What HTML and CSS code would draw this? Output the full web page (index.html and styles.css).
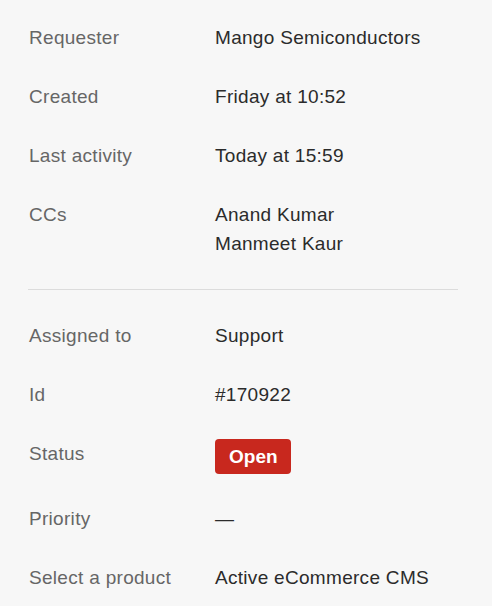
FILE: index.html
```html
<!DOCTYPE html>
<html lang="en">
<head>
  <meta charset="UTF-8">
  <meta name="viewport" content="width=device-width, initial-scale=1.0">
  <title>Ticket details</title>
  <link rel="stylesheet" href="styles.css">
</head>
<body>
  <div class="details">
    <div class="group">
      <div class="row">
        <div class="label">Requester</div>
        <div class="value">Mango Semiconductors</div>
      </div>
      <div class="row">
        <div class="label">Created</div>
        <div class="value">Friday at 10:52</div>
      </div>
      <div class="row">
        <div class="label">Last activity</div>
        <div class="value">Today at 15:59</div>
      </div>
      <div class="row">
        <div class="label">CCs</div>
        <div class="value">Anand Kumar<br>Manmeet Kaur</div>
      </div>
    </div>

    <hr class="divider">

    <div class="group">
      <div class="row">
        <div class="label">Assigned to</div>
        <div class="value">Support</div>
      </div>
      <div class="row">
        <div class="label">Id</div>
        <div class="value">#170922</div>
      </div>
      <div class="row">
        <div class="label">Status</div>
        <div class="value"><span class="badge">Open</span></div>
      </div>
      <div class="row">
        <div class="label">Priority</div>
        <div class="value">—</div>
      </div>
      <div class="row">
        <div class="label">Select a product</div>
        <div class="value">Active eCommerce CMS</div>
      </div>
    </div>
  </div>
</body>
</html>
```

FILE: styles.css
```css
body {
  background-color: #f7f7f7;
  color: #333;
  font-family: "Liberation Sans", Arial, sans-serif;
  font-size: 19px;
  line-height: 29px;
  letter-spacing: 0.3px;
  margin: 0;
  padding: 0;
}
.details {
  padding: 23px 34px 0 29px;
}
.group {
  display: flex;
  flex-direction: column;
  gap: 30px;
}
.row {
  display: flex;
  align-items: flex-start;
}
.label {
  width: 186px;
  flex-shrink: 0;
  color: #666;
}
.value {
  color: #2b2b2b;
}
.divider {
  border: none;
  border-top: 1px solid #dcdcdc;
  margin: 31px 0 31px -1px;
}
.badge {
  display: inline-block;
  background-color: #c8281e;
  color: white;
  font-weight: bold;
  letter-spacing: 0;
  padding: 0 13px 0 14px;
  line-height: 35px;
  height: 35px;
  border-radius: 4px;
}
```
